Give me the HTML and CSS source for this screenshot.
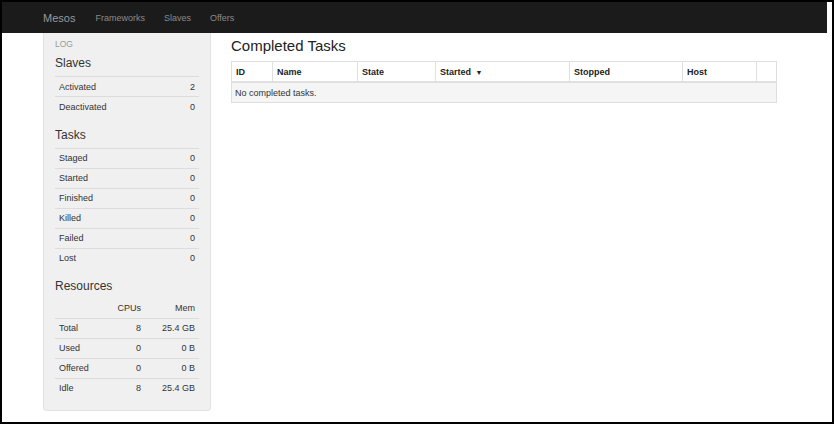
FILE: index.html
```html
<!DOCTYPE html>
<html>
<head>
<meta charset="utf-8">
<link rel="stylesheet" href="styles.css">
</head>
<body>
<div class="frame">
  <div class="navbar">
    <span class="brand">Mesos</span>
    <span class="nav-link">Frameworks</span>
    <span class="nav-link">Slaves</span>
    <span class="nav-link">Offers</span>
  </div>
  <div class="container">
    <div class="sidebar">
      <div class="log">LOG</div>
      <h4 class="side-h">Slaves</h4>
      <table class="side-table">
        <tr><td>Activated</td><td class="num">2</td></tr>
        <tr><td>Deactivated</td><td class="num">0</td></tr>
      </table>
      <h4 class="side-h">Tasks</h4>
      <table class="side-table">
        <tr><td>Staged</td><td class="num">0</td></tr>
        <tr><td>Started</td><td class="num">0</td></tr>
        <tr><td>Finished</td><td class="num">0</td></tr>
        <tr><td>Killed</td><td class="num">0</td></tr>
        <tr><td>Failed</td><td class="num">0</td></tr>
        <tr><td>Lost</td><td class="num">0</td></tr>
      </table>
      <h4 class="side-h">Resources</h4>
      <table class="side-table res">
        <tr class="head"><td></td><td class="num">CPUs</td><td class="num">Mem</td></tr>
        <tr><td>Total</td><td class="num">8</td><td class="num">25.4 GB</td></tr>
        <tr><td>Used</td><td class="num">0</td><td class="num">0 B</td></tr>
        <tr><td>Offered</td><td class="num">0</td><td class="num">0 B</td></tr>
        <tr><td>Idle</td><td class="num">8</td><td class="num">25.4 GB</td></tr>
      </table>
    </div>
    <div class="main">
      <h2 class="title">Completed Tasks</h2>
      <table class="tasks">
        <colgroup>
          <col class="c-id"><col class="c-name"><col class="c-state"><col class="c-started"><col class="c-stopped"><col class="c-host"><col class="c-extra">
        </colgroup>
        <thead>
          <tr><th>ID</th><th>Name</th><th>State</th><th>Started <span class="caret">&#9660;</span></th><th>Stopped</th><th>Host</th><th></th></tr>
        </thead>
        <tbody>
          <tr><td colspan="7">No completed tasks.</td></tr>
        </tbody>
      </table>
    </div>
  </div>
</div>
</body>
</html>
```
FILE: styles.css
```css
html, body {
  margin: 0;
  padding: 0;
  background: #fff;
}
.frame {
  width: 834px;
  height: 424px;
  box-sizing: border-box;
  border: 2px solid #000;
  padding-right: 5px;
  font-family: "Liberation Sans", Arial, sans-serif;
  color: #333;
  overflow: hidden;
}
.navbar {
  height: 31px;
  background: #1b1b1b;
  display: flex;
  align-items: center;
  padding-left: 41px;
}
.brand {
  font-size: 11px;
  color: #999;
  margin-right: 20px;
}
.nav-link {
  font-size: 9px;
  color: #8a8a8a;
  margin-right: 19px;
}
.container {
  display: flex;
  align-items: flex-start;
  padding-left: 41px;
  gap: 20px;
}
.sidebar {
  width: 168px;
  box-sizing: border-box;
  background: #f0f0f0;
  border: 1px solid #e2e2e2;
  border-top: none;
  border-radius: 0 0 4px 4px;
  padding: 6px 11px 12px;
}
.log {
  font-size: 8.5px;
  line-height: 10px;
  color: #999;
}
.side-h {
  margin: 11px 0 6px;
  font-size: 12px;
  line-height: 14px;
  font-weight: normal;
  color: #333;
}
.log + .side-h {
  margin-top: 7px;
}
.side-table {
  width: 100%;
  border-collapse: collapse;
  font-size: 9px;
}
.side-table td {
  height: 20px;
  padding: 0 4px;
  border-top: 1px solid #dcdcdc;
  box-sizing: border-box;
  vertical-align: middle;
  color: #333;
}
.side-table .num {
  text-align: right;
}
.side-table .head td {
  border-top: none;
  height: 19px;
}
.res td:nth-child(2) {
  width: 40px;
}
.res td:nth-child(3) {
  width: 54px;
}
.main {
  width: 545px;
}
.title {
  margin: 4px 0 6px;
  font-size: 15px;
  line-height: 18px;
  font-weight: normal;
  color: #222;
}
.tasks {
  width: 545px;
  border-collapse: collapse;
  table-layout: fixed;
  font-size: 9px;
  border: 1px solid #dedede;
}
.c-id { width: 41px; }
.c-name { width: 85px; }
.c-state { width: 78px; }
.c-started { width: 134px; }
.c-stopped { width: 113px; }
.c-host { width: 74px; }
.c-extra { width: 20px; }
.tasks th {
  height: 19px;
  padding: 0 4px;
  text-align: left;
  font-weight: bold;
  color: #222;
  border-left: 1px solid #e0e0e0;
  border-bottom: 2px solid #e0e0e0;
  background: #fff;
}
.tasks th:first-child {
  border-left: none;
}
.caret {
  font-size: 7px;
  margin-left: 2px;
}
.tasks td {
  height: 19px;
  padding: 0 3px;
  background: #f5f5f5;
  color: #333;
}
```
